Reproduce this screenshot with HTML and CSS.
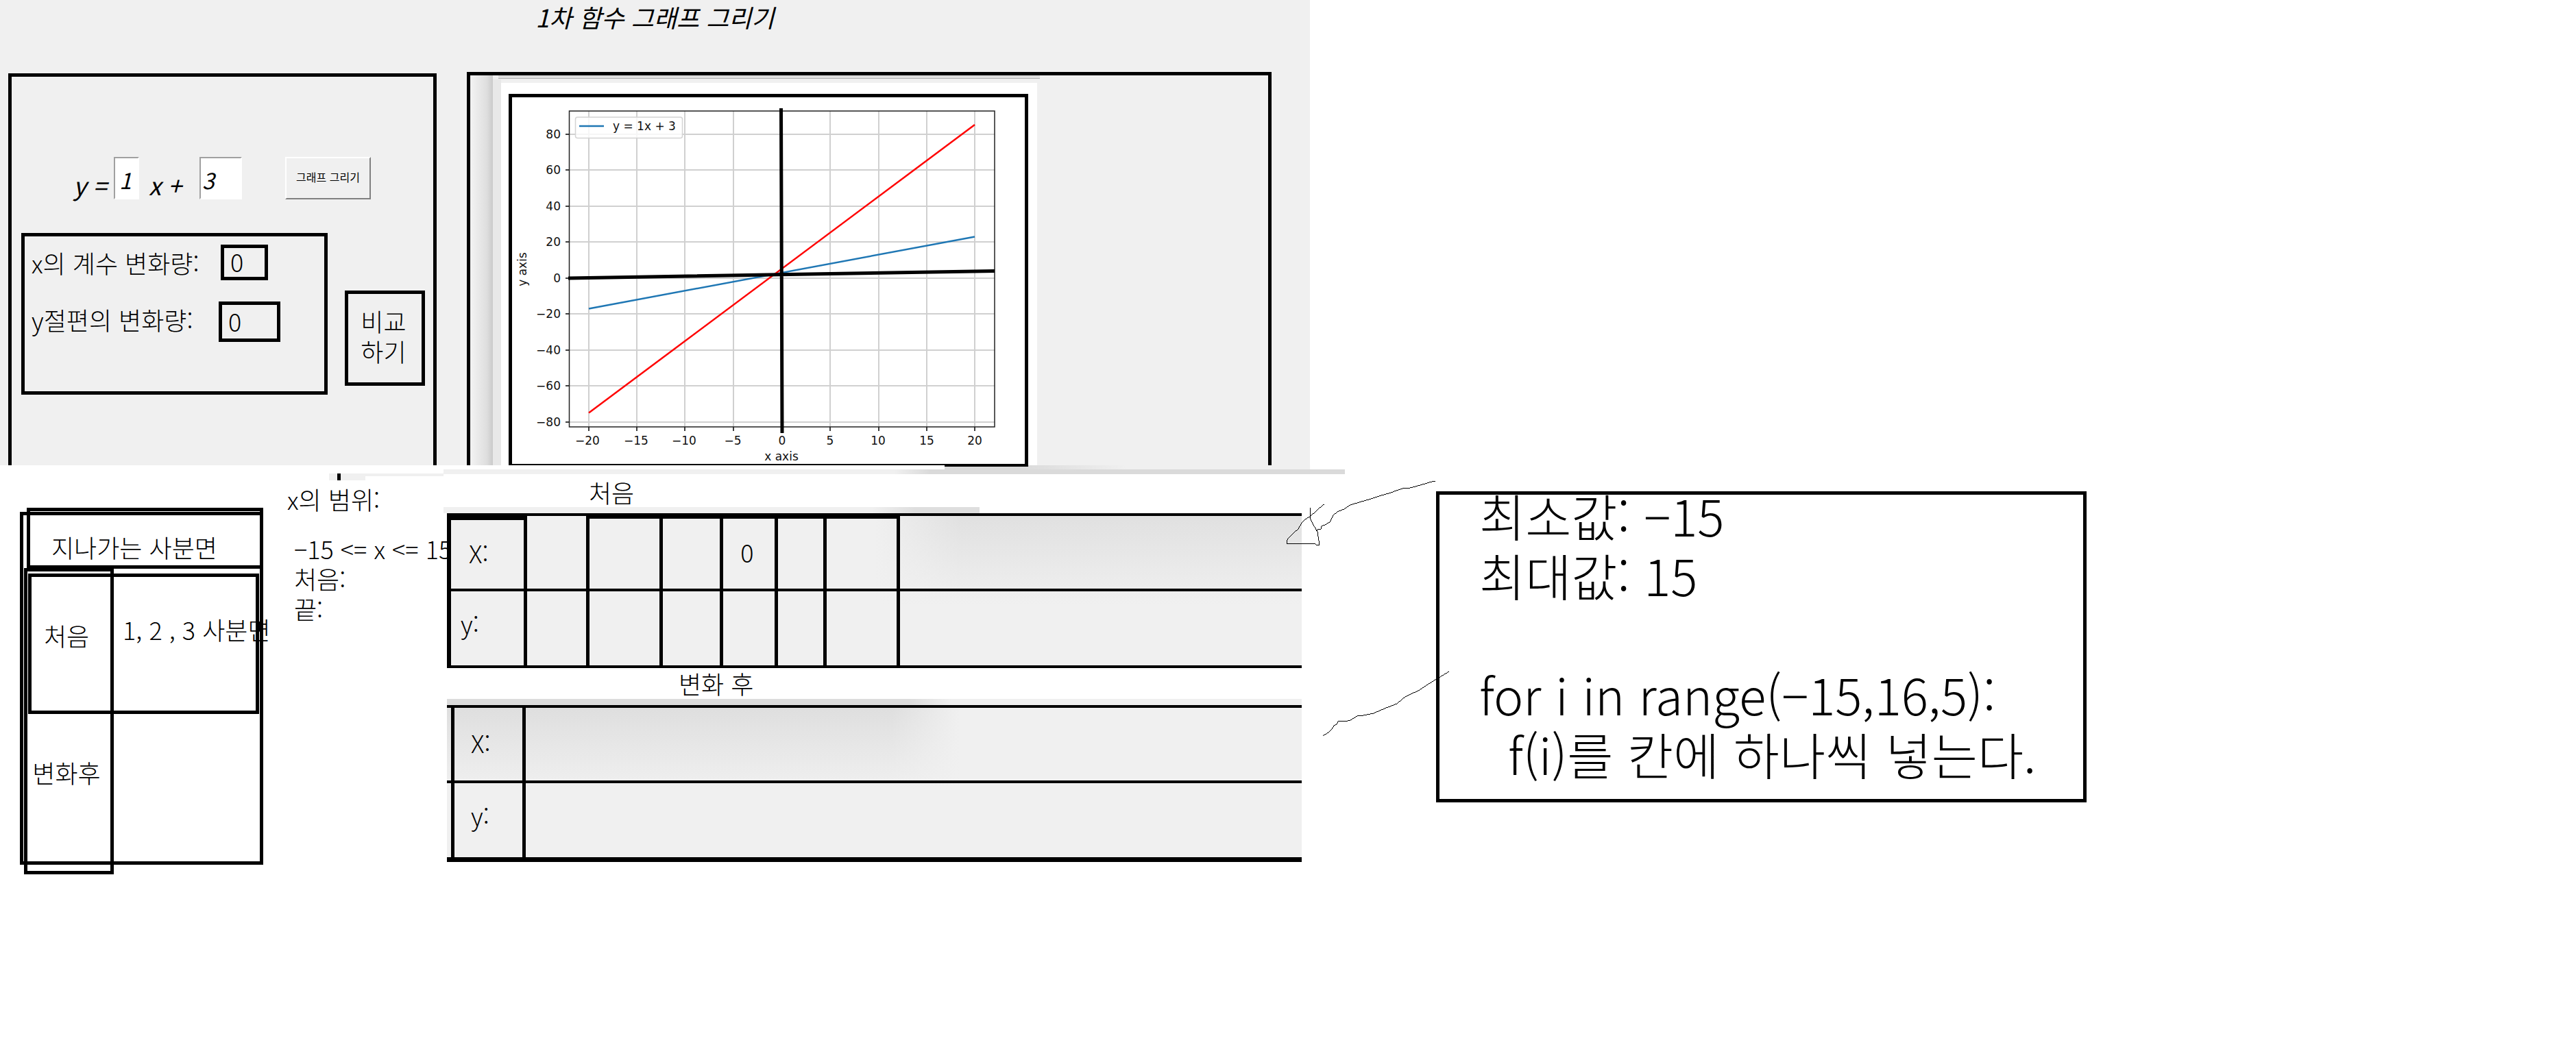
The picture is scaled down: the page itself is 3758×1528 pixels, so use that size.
FILE: index.html
```html
<!DOCTYPE html>
<html lang="ko">
<head>
<meta charset="utf-8">
<title>1차 함수 그래프 그리기</title>
<link rel="stylesheet" href="styles.css">
</head>
<body>
<main class="app">
  <h1 class="title">1차 함수 그래프 그리기</h1>
  <section class="panel controls">
    <form class="formula">
      <label class="term-y" for="slope">y =</label>
      <input class="entry entry-slope" id="slope" value="1">
      <label class="term-x" for="intercept">x +</label>
      <input class="entry entry-intercept" id="intercept" value="3">
      <button class="draw" type="button">그래프 그리기</button>
    </form>
    <div class="compare-row">
      <div class="changes">
        <div class="change change-slope">
          <label for="dslope">x의 계수 변화량:</label>
          <input class="delta" id="dslope" value="0">
        </div>
        <div class="change change-intercept">
          <label for="dintercept">y절편의 변화량:</label>
          <input class="delta" id="dintercept" value="0">
        </div>
      </div>
      <button class="compare" type="button">비교<br>하기</button>
    </div>
  </section>
  <section class="panel graph">
    <div class="figure">
      <svg class="chart" viewBox="747 142 748 535" role="img" aria-label="y = 1x + 3">
        <g class="grid">
          <path d="M859 162V623M929 162V623M999 162V623M1070 162V623M1141 162V623M1211 162V623M1282 162V623M1352 162V623M1422 162V623"/>
          <path d="M831 196H1451M831 248H1451M831 301H1451M831 353H1451M831 406H1451M831 458H1451M831 511H1451M831 563H1451M831 616H1451"/>
        </g>
        <path class="ticks" d="M859 623v6M929 623v6M999 623v6M1070 623v6M1141 623v6M1211 623v6M1282 623v6M1352 623v6M1422 623v6M831 196h-6M831 248h-6M831 301h-6M831 353h-6M831 406h-6M831 458h-6M831 511h-6M831 563h-6M831 616h-6"/>
        <path class="blue" d="M859 450.500L1422 345.500"/>
        <path class="red" d="M859 602.500L1422 182"/>
        <rect class="spine" x="830.500" y="162" width="620.500" height="461"/>
        <rect class="legend" x="839.500" y="171" width="156" height="30.500" rx="3"/>
        <path class="blue" d="M845 184H881"/>
        <path class="axis" d="M829 406L1451 395.500M1139.500 158L1141 632"/>
        <g class="labels">
          <text x="894" y="190">y = 1x + 3</text>
          <g text-anchor="end">
            <text x="818" y="202">80</text><text x="818" y="254">60</text><text x="818" y="307">40</text>
            <text x="818" y="359">20</text><text x="818" y="412">0</text><text x="818" y="464">−20</text>
            <text x="818" y="517">−40</text><text x="818" y="569">−60</text><text x="818" y="622">−80</text>
          </g>
          <g text-anchor="middle">
            <text x="857" y="649">−20</text><text x="928" y="649">−15</text><text x="998" y="649">−10</text>
            <text x="1069" y="649">−5</text><text x="1141" y="649">0</text><text x="1211" y="649">5</text>
            <text x="1281" y="649">10</text><text x="1352" y="649">15</text><text x="1422" y="649">20</text>
            <text x="1140" y="672">x axis</text>
            <text transform="translate(768 393) rotate(-90)">y axis</text>
          </g>
        </g>
      </svg>
    </div>
  </section>
</main>

<svg class="scraps" viewBox="0 679 1962 22" preserveAspectRatio="none" aria-hidden="true">
  <defs>
    <linearGradient id="fade-in"><stop offset="0.500" stop-color="#f0f0f0"/><stop offset="0.540" stop-color="#dadada"/></linearGradient>
    <linearGradient id="fade-out"><stop offset="0.200" stop-color="#dadada"/><stop offset="0.500" stop-color="#f0f0f0"/></linearGradient>
  </defs>
  <rect x="1378" y="679" width="533" height="6" fill="url(#fade-out)"/>
  <rect x="1378" y="679" width="122" height="2"/>
  <rect x="647" y="685" width="1315" height="7" fill="url(#fade-in)"/>
  <path fill="#f0f0f0" d="M480 691H647V695H533V701H480Z"/>
  <rect x="492" y="691" width="5" height="10"/>
</svg>

<div class="sheets">
  <section class="quadrants">
    <svg class="frames" viewBox="29 741 355 535" preserveAspectRatio="none" aria-hidden="true">
      <rect x="31.500" y="749.500" width="350" height="510"/>
      <rect x="41.500" y="743.500" width="340" height="84"/>
      <rect x="37.500" y="831.500" width="126" height="442"/>
      <rect x="43.500" y="839.500" width="332" height="200"/>
    </svg>
    <table class="quadrant-table">
      <tr class="q-head"><th colspan="2">지나가는 사분면</th></tr>
      <tr class="q-before"><th>처음</th><td>1, 2 , 3 사분면</td></tr>
      <tr class="q-after"><th>변화후</th><td></td></tr>
    </table>
  </section>

  <section class="range">
    <p>x의 범위:</p>
    <div class="range-values">
      <p>−15 &lt;= x &lt;= 15</p>
      <p>처음:</p>
      <p>끝:</p>
    </div>
  </section>

  <section class="values">
    <h2 class="caption caption-before">처음</h2>
    <div class="band band-before"></div>
    <table class="xy xy-before">
      <colgroup><col class="c-head"><col class="c-1"><col class="c-2"><col class="c-3"><col class="c-4"><col class="c-5"><col class="c-6"><col></colgroup>
      <tr class="row-x"><th>X:</th><td></td><td class="heavy"></td><td class="heavy"></td><td class="heavy">0</td><td class="heavy"></td><td class="heavy"></td><td></td></tr>
      <tr class="row-y"><th>y:</th><td></td><td></td><td></td><td></td><td></td><td></td><td></td></tr>
    </table>
    <h2 class="caption caption-after">변화 후</h2>
    <div class="band band-after"></div>
    <table class="xy xy-after">
      <colgroup><col class="c-after"><col></colgroup>
      <tr class="row-x"><th>X:</th><td></td></tr>
      <tr class="row-y"><th>y:</th><td></td></tr>
    </table>
  </section>

  <section class="note">
    <p>최소값: −15</p>
    <p>최대값: 15</p>
    <p class="note-code">for i in range(−15,16,5):</p>
    <p class="note-body">f(i)를 칸에 하나씩 넣는다.</p>
  </section>

  <svg class="scribble" viewBox="1870 701 250 380" aria-hidden="true">
    <path d="M2094 703L2089 703L2065 710L2057 712L2046 713L2026 720L2012 724L1997 729L1983 733L1970 737L1961 743L1951 747L1945 752L1940 762L1933 766L1928 768L1927 772L1922 773L1920 775"/>
    <path d="M1932 737H1930L1911 754L1904 758L1899 763L1894 772L1887 778L1879 786L1877 791V793.500H1918L1922 796H1925L1922 776L1916 766L1912 758L1911.500 741"/>
    <path d="M2114 980L2086 997L2071 1007L2050 1017L2038 1027L2020 1034L2004 1041L1990 1044L1980 1045L1970 1051L1962 1053H1952L1950 1057L1946 1059L1943 1064L1938 1069L1930 1074"/>
  </svg>
</div>
</body>
</html>
```
FILE: styles.css
```css
* { box-sizing: border-box; }

body {
  margin: 0;
  background: #fff;
  color: #000;
  font: 300 36px/44px "Noto Sans CJK KR", sans-serif;
}

h1, h2, p { margin: 0; font-weight: 300; }

input, button {
  margin: 0;
  border-radius: 0;
  color: #000;
  font: inherit;
}

/* Application window */
.app {
  display: grid;
  grid-template-columns: 625fr 1174fr;
  grid-template-rows: 105px 574px;
  column-gap: 44px;
  width: 50.85%;
  padding: 0 56px 0 12px;
  background: #f0f0f0;
}

.title {
  grid-column: 1 / -1;
  padding-left: 44px;
  font-size: 36px;
  line-height: 48px;
  font-style: italic;
  font-weight: 400;
  text-align: center;
}

.panel {
  min-width: 0;
  border: 5px solid #000;
  border-bottom: 0;
}

.controls {
  margin-top: 2px;
  padding: 117px 12px 0 14px;
}

.formula {
  display: flex;
  height: 62px;
  padding-left: 76px;
  font-size: 32px;
  font-style: italic;
  font-weight: 400;
  white-space: nowrap;
}

.formula label { padding-top: 18px; font-size: 36px; }
.term-y { width: 59px; }
.term-x { width: 74px; margin-left: 14px; }

.entry {
  height: 62px;
  padding: 4px 6px 0;
  border: 2px solid #fff;
  border-top-color: #a0a0a0;
  border-left-color: #a0a0a0;
  background: #fff;
}
.entry-slope { width: 37px; }
.entry-intercept { width: 62px; padding-left: 2px; }

.draw {
  width: 125px;
  margin-left: 63px;
  padding: 0 0 4px;
  border: 2px solid #fff;
  border-right-color: #808080;
  border-bottom-color: #808080;
  background: #f0f0f0;
  font-size: 16px;
  font-style: normal;
}

.compare-row {
  display: flex;
  justify-content: space-between;
  align-items: flex-start;
  margin-top: 49px;
}

.changes {
  width: 447px;
  height: 236px;
  padding: 12px 10px;
  border: 5px solid #000;
}

.change {
  display: flex;
  align-items: center;
  justify-content: space-between;
  white-space: nowrap;
}
.change-slope { height: 52px; padding-right: 72px; }
.change-intercept { height: 59px; margin-top: 31px; padding-right: 54px; }
.change-intercept label { padding-bottom: 8px; }

.delta {
  width: 69px;
  height: 100%;
  padding: 0 9px 4px;
  border: 5px solid #000;
  background: transparent;
}
.change-intercept .delta { width: 90px; }

.compare {
  width: 117px;
  height: 139px;
  margin-top: 84px;
  padding: 0 4px 8px 0;
  border: 5px solid #000;
  background: transparent;
}

/* Graph */
.graph {
  padding: 11px 0 0 45px;
  background:
    linear-gradient(#ddd, #ddd) 41px 0 / 790px 4px no-repeat,
    linear-gradient(#b0b0b0, #b0b0b0) 41px 4px / 790px 1px no-repeat,
    linear-gradient(#e8e8e8, #e8e8e8) 33px 6px / 12px 100% no-repeat,
    linear-gradient(90deg, #f0f0f0, #dedede 70%, #cacaca) 4px 0 / 29px 100% no-repeat;
}

.figure {
  width: 782px;
  max-width: 100%;
  padding: 16px 13px 0 11px;
  background: #fff;
}

.chart {
  display: block;
  width: 100%;
  border: 5px solid #000;
  border-bottom-width: 2px;
}

.chart path, .chart rect { fill: none; }
.chart .grid { stroke: #d0d0d0; stroke-width: 2; }
.chart .ticks { stroke: #000; stroke-width: 1.500; }
.chart .spine { stroke: #222; stroke-width: 1.500; }
.chart .blue { stroke: #1f77b4; stroke-width: 2.500; }
.chart .red { stroke: #f00; stroke-width: 2.500; }
.chart .axis { stroke: #000; stroke-width: 5; }
.chart .legend { fill: #fff; fill-opacity: 0.800; stroke: #d4d4d4; stroke-width: 1.500; }
.chart .labels { font: 400 17px "DejaVu Sans", sans-serif; fill: #111; }

.scraps {
  display: block;
  width: 52.21%;
  height: 22px;
}

/* Lower sheets */
.sheets {
  position: relative;
  display: grid;
  grid-template-columns:
    minmax(0, 29fr) minmax(0, 355fr) minmax(0, 35fr) minmax(0, 233fr)
    minmax(0, 1247fr) minmax(0, 196fr) minmax(0, 949fr) minmax(0, 714fr);
  align-items: start;
}

.quadrants {
  position: relative;
  grid-column: 2;
  margin-top: 40px;
  height: 535px;
}

.frames {
  position: absolute;
  inset: 0;
  width: 100%;
  height: 100%;
  fill: none;
  stroke: #000;
  stroke-width: 5;
}

table {
  width: 100%;
  border-spacing: 0;
  table-layout: fixed;
}

th, td {
  padding: 0;
  font-weight: 300;
  text-align: left;
  white-space: nowrap;
}

.quadrant-table { position: relative; table-layout: auto; }
.q-head { height: 88px; }
.q-head th { padding: 26px 0 0 46px; }
.q-before { height: 196px; }
.q-after { height: 204px; }
.quadrant-table tr:not(.q-head) th { text-align: center; }
.q-before th { width: 136px; }
.q-before td { max-width: 0; padding: 0 0 18px 14px; }

.range {
  position: relative;
  z-index: 1;
  grid-column: 4;
  padding-top: 5px;
  white-space: nowrap;
}
.range-values { padding: 28px 0 0 10px; }

.values { grid-column: 5; }

.caption { font-size: 36px; }
.caption-before { padding: 0 0 5px 16.600%; line-height: 34px; }
.caption-after { padding-left: 27.100%; line-height: 45px; }

.band { height: 9px; }
.band-before {
  width: 62.7%;
  margin-left: -5px;
  background: linear-gradient(90deg, #f0f0f0 80%, #dedede 88%);
}
.band-after { background: linear-gradient(90deg, #dcdcdc 54%, #efefef 59%); }

.xy { border-bottom: 4px solid #000; }
.xy th, .xy td { border-top: 4px solid #000; }
.xy .row-x { height: 110px; }
.xy .row-y { height: 112px; }
.xy .row-y th { padding-bottom: 16px; }

.xy-before {
  background:
    linear-gradient(90deg, #f0f0f0 50%, transparent 60%),
    linear-gradient(#e0e0e0, #f0f0f0 60%);
}
.xy-before th { border-left: 6px solid #000; }
.xy-before td { border-left: 5px solid #000; text-align: center; }
.xy-before .row-x th { padding: 0 0 6px 26px; border-top-width: 10px; }
.xy-before .row-y th { padding-left: 14px; }
.xy-before .heavy { padding: 0 5px 6px 0; border-top-width: 8px; }
.c-head { width: 9%; }
.c-1 { width: 7.300%; }
.c-2 { width: 8.600%; }
.c-3 { width: 7.050%; }
.c-4 { width: 6.350%; }
.c-5 { width: 5.700%; }
.c-6 { width: 8.650%; }

.xy-after {
  border-bottom-width: 7px;
  background:
    linear-gradient(90deg, transparent 52%, #f0f0f0 60%),
    linear-gradient(#dedede, #f0f0f0 55%);
}
.xy-after th {
  padding-left: 35px;
  background: linear-gradient(#000, #000) 6px 0 / 5px 100% no-repeat;
}
.xy-after .row-x th { padding-bottom: 6px; }
.xy-after th + td { border-left: 5px solid #000; }
.c-after { width: 8.800%; }

.note {
  grid-column: 7;
  height: 454px;
  margin-top: 16px;
  padding-left: 58px;
  border: 5px solid #000;
  font-size: 73px;
  line-height: 87px;
  white-space: nowrap;
}
.note p:first-child { margin-top: -14px; }
.note-code { margin-top: 87px; }
.note-body { padding-left: 42px; }

.scribble {
  position: absolute;
  top: 0;
  left: 49.760%;
  width: 6.652%;
  fill: none;
  stroke: #000;
  stroke-width: 1;
  shape-rendering: crispEdges;
}
```
